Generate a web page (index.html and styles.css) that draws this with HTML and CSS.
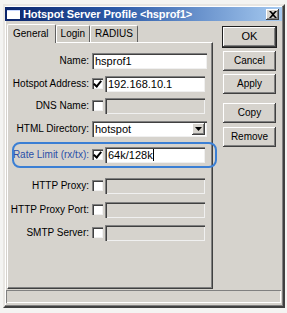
FILE: index.html
```html
<!DOCTYPE html>
<html>
<head>
<meta charset="utf-8">
<link rel="stylesheet" href="styles.css">
</head>
<body>
<div class="window">
  <div class="titlebar">
    <span class="appicon"></span>
    <span class="title">Hotspot Server Profile &lt;hsprof1&gt;</span>
    <span class="close"><svg width="8" height="7" viewBox="0 0 8 7"><path d="M0 0h2l2 2 2-2h2L5 3.5 8 7H6L4 5 2 7H0l3-3.5z" fill="#000"/></svg></span>
  </div>
  <div class="content">
    <div class="leftcol">
      <div class="tabs">
        <span class="tab active">General</span>
        <span class="tab">Login</span>
        <span class="tab">RADIUS</span>
      </div>
      <div class="panel">
        <div class="row r-name">
          <span class="label">Name:</span>
          <span class="field wide">hsprof1</span>
        </div>
        <div class="row r-addr">
          <span class="label">Hotspot Address:</span>
          <span class="check on"></span>
          <span class="field">192.168.10.1</span>
        </div>
        <div class="row r-dns">
          <span class="label">DNS Name:</span>
          <span class="check"></span>
          <span class="field off"></span>
        </div>
        <div class="row r-html">
          <span class="label">HTML Directory:</span>
          <span class="field wide select">hotspot<span class="drop"><svg width="7" height="4" viewBox="0 0 7 4"><path d="M0 0h7L3.5 4z" fill="#000"/></svg></span></span>
        </div>
        <div class="row r-rate">
          <span class="label blue">Rate Limit (rx/tx):</span>
          <span class="check on"></span>
          <span class="field">64k/128k<span class="caret"></span></span>
          <span class="oval"></span>
        </div>
        <div class="row r-proxy">
          <span class="label">HTTP Proxy:</span>
          <span class="check"></span>
          <span class="field off"></span>
        </div>
        <div class="row r-port">
          <span class="label">HTTP Proxy Port:</span>
          <span class="check"></span>
          <span class="field off"></span>
        </div>
        <div class="row r-smtp">
          <span class="label">SMTP Server:</span>
          <span class="check"></span>
          <span class="field off"></span>
        </div>
      </div>
    </div>
    <div class="buttons">
      <span class="btn default b-ok">OK</span>
      <span class="btn b-cancel">Cancel</span>
      <span class="btn b-apply">Apply</span>
      <span class="btn b-copy">Copy</span>
      <span class="btn b-remove">Remove</span>
    </div>
  </div>
  <div class="status"></div>
</div>
</body>
</html>
```
FILE: styles.css
```css
html, body {
  margin: 0;
  padding: 0;
  background: #f4f4f2;
}
body {
  font-family: "Liberation Sans", Arial, sans-serif;
  font-size: 10px;
  color: #000;
}
.window {
  position: relative;
  margin: 4px 0 0 3px;
  width: 278px;
  height: 300px;
  background: #d6d3cd;
  border: 2px solid;
  border-color: #e8e6e2 #404040 #404040 #e8e6e2;
  box-shadow: inset -1px -1px 0 #808080, inset 1px 1px 0 #fff;
  display: flex;
  flex-direction: column;
}
.titlebar {
  margin: 1px 1px 0 0;
  height: 14px;
  background: linear-gradient(to right, #0a246a 0%, #2c5aa8 40%, #a6caf0 100%);
  display: flex;
  align-items: center;
  padding-left: 2px;
}
.appicon {
  width: 13px;
  height: 8px;
  background: #fff;
  border-top: 1px solid #c8d8ff;
  margin-right: 3px;
}
.title {
  color: #fff;
  font-weight: bold;
  font-size: 11px;
  letter-spacing: -0.1px;
  flex: 1;
}
.close {
  width: 13px;
  height: 11px;
  margin-right: 3px;
  background: #d6d3cd;
  box-shadow: inset -1px -1px 0 #404040, inset 1px 1px 0 #fff, inset -2px -2px 0 #808080;
  display: flex;
  align-items: center;
  justify-content: center;
}
.content {
  display: flex;
  padding: 3px 0 0 2px;
  flex: 1;
}
.leftcol {
  width: 206px;
  display: flex;
  flex-direction: column;
}
.tabs {
  display: flex;
  height: 18px;
  align-items: flex-end;
}
.tab {
  height: 16px;
  line-height: 16px;
  padding: 0 4px;
  border: 1px solid;
  border-color: #fff #606060 transparent #fff;
  border-bottom: none;
  border-radius: 2px 2px 0 0;
  background: #d0cdc6;
}
.tab.active {
  height: 18px;
  line-height: 17px;
  padding: 0 6px 0 5px;
  position: relative;
  z-index: 1;
  background: #d6d3cd;
  margin-bottom: -1px;
}
.panel {
  flex: 1;
  border: 1px solid;
  border-color: #fff #404040 #404040 #fff;
  box-shadow: inset -1px -1px 0 #808080;
  margin-bottom: 1px;
  padding-top: 9px;
}
.row {
  position: relative;
  display: flex;
  align-items: center;
  height: 17px;
  margin-bottom: 6px;
}
.r-addr { margin-bottom: 5px; }
.r-html { margin-bottom: 9px; }
.r-rate { margin-bottom: 14px; }
.r-proxy { margin-bottom: 7px; }
.r-port { margin-bottom: 6px; }
.label {
  width: 81px;
  text-align: right;
  white-space: nowrap;
  margin-right: 3px;
}
.label.blue { color: #2b4fa8; }
.check {
  width: 11px;
  height: 11px;
  background: #fff;
  box-shadow: inset 1px 1px 0 #808080, inset 2px 2px 0 #404040, inset -1px -1px 0 #f0f0f0;
  margin-right: 2px;
  position: relative;
}
.check.on::after {
  content: "";
  position: absolute;
  left: 3px;
  top: 1px;
  width: 3px;
  height: 6px;
  border: solid #000;
  border-width: 0 2px 2px 0;
  transform: rotate(40deg);
}
.field {
  position: relative;
  width: 97px;
  height: 16px;
  line-height: 16px;
  padding-left: 3px;
  font-size: 11px;
  background: #fff;
  box-shadow: inset 1px 1px 0 #808080, inset 2px 2px 0 #404040, inset -1px -1px 0 #f0f0f0;
  white-space: nowrap;
  overflow: hidden;
}
.field.wide { width: 112px; }
.field.off { background: #d6d3cd; }
.select { display: flex; }
.drop {
  position: absolute;
  right: 2px;
  top: 2px;
  width: 13px;
  height: 12px;
  background: #d6d3cd;
  box-shadow: inset -1px -1px 0 #404040, inset 1px 1px 0 #fff, inset -2px -2px 0 #808080;
  display: flex;
  align-items: center;
  justify-content: center;
}
.caret {
  display: inline-block;
  width: 1px;
  height: 12px;
  background: #000;
  vertical-align: -2px;
}
.oval {
  position: absolute;
  left: 4px;
  right: -5px;
  top: -4px;
  bottom: -5px;
  border: 2px solid #3b7fd4;
  border-radius: 8px;
  pointer-events: none;
}
.buttons {
  display: flex;
  flex-direction: column;
  margin-left: 10px;
  width: 53px;
}
.btn {
  height: 20px;
  line-height: 19px;
  text-align: center;
  background: #d6d3cd;
  box-shadow: inset -1px -1px 0 #404040, inset 1px 1px 0 #fff, inset -2px -2px 0 #808080;
}
.btn.default {
  box-shadow: 0 0 0 1px #202020, inset -1px -1px 0 #404040, inset 1px 1px 0 #fff, inset -2px -2px 0 #808080;
}
.b-ok { margin-top: 3px; font-size: 11px; }
.b-cancel { margin-top: 4px; }
.b-apply { margin-top: 3px; }
.b-copy { margin-top: 9px; }
.b-remove { margin-top: 4px; }
.status {
  margin: 0 2px 3px 1px;
  height: 13px;
  box-shadow: inset 1px 1px 0 #808080, inset -1px -1px 0 #fff;
}
```
